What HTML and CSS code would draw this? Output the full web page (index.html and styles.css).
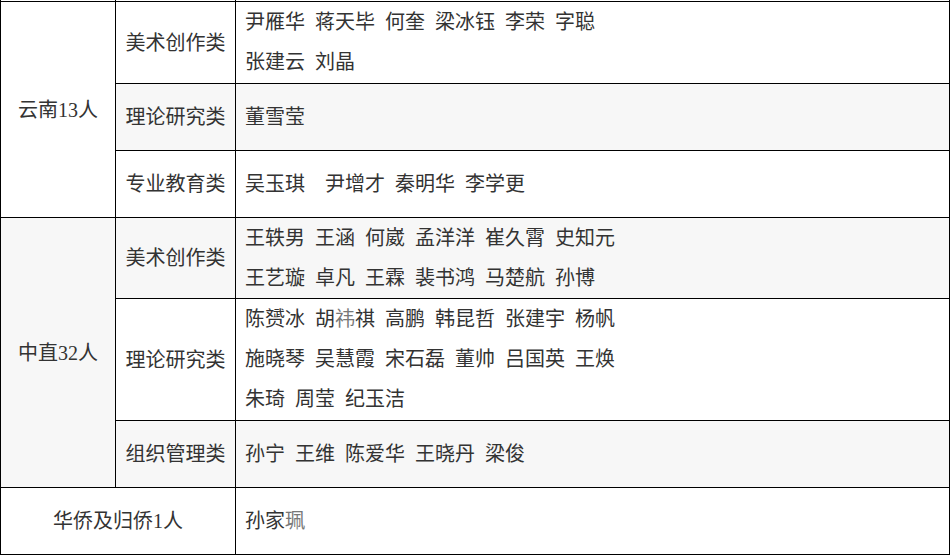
FILE: index.html
```html
<!DOCTYPE html>
<html lang="zh-CN">
<head>
<meta charset="utf-8">
<title>名单</title>
<link rel="stylesheet" href="styles.css">
</head>
<body>
<table class="roster">
  <colgroup>
    <col class="c-region">
    <col class="c-cat">
    <col class="c-names">
  </colgroup>
  <tbody>
    <tr class="cut"><td></td><td></td><td></td></tr>
    <tr>
      <td class="region" rowspan="3">云南13人</td>
      <td class="cat">美术创作类</td>
      <td class="names multi"><div>尹雁华&nbsp; 蒋天毕&nbsp; 何奎&nbsp; 梁冰钰&nbsp; 李荣&nbsp; 字聪</div><div>张建云&nbsp; 刘晶</div></td>
    </tr>
    <tr class="alt single">
      <td class="cat">理论研究类</td>
      <td class="names">董雪莹</td>
    </tr>
    <tr class="single">
      <td class="cat">专业教育类</td>
      <td class="names">吴玉琪&nbsp;&nbsp;&nbsp; 尹增才&nbsp; 秦明华&nbsp; 李学更</td>
    </tr>
    <tr class="alt">
      <td class="region" rowspan="3">中直32人</td>
      <td class="cat">美术创作类</td>
      <td class="names"><div>王轶男&nbsp; 王涵&nbsp; 何崴&nbsp; 孟洋洋&nbsp; 崔久霄&nbsp; 史知元</div><div>王艺璇&nbsp; 卓凡&nbsp; 王霖&nbsp; 裴书鸿&nbsp; 马楚航&nbsp; 孙博</div></td>
    </tr>
    <tr>
      <td class="cat">理论研究类</td>
      <td class="names multi"><div>陈赟冰&nbsp; 胡<span class="rare">祎</span>祺&nbsp; 高鹏&nbsp; 韩昆哲&nbsp; 张建宇&nbsp; 杨帆</div><div>施晓琴&nbsp; 吴慧霞&nbsp; 宋石磊&nbsp; 董帅&nbsp; 吕国英&nbsp; 王焕</div><div>朱琦&nbsp; 周莹&nbsp; 纪玉洁</div></td>
    </tr>
    <tr class="alt single">
      <td class="cat">组织管理类</td>
      <td class="names">孙宁&nbsp; 王维&nbsp; 陈爱华&nbsp; 王晓丹&nbsp; 梁俊</td>
    </tr>
    <tr class="single">
      <td class="region" colspan="2">华侨及归侨1人</td>
      <td class="names">孙家<span class="rare">珮</span></td>
    </tr>
  </tbody>
</table>
</body>
</html>
```

FILE: styles.css
```css
html, body {
  margin: 0;
  padding: 0;
  background: #ffffff;
}

body {
  font-family: "Liberation Serif", "Noto Sans CJK SC", serif;
  font-size: 20px;
  color: #333333;
}

.roster {
  width: 950px;
  border-collapse: collapse;
  table-layout: fixed;
}

.c-region { width: 115px; }
.c-cat { width: 120px; }

.roster td {
  border: 1px solid #000000;
  padding: 0 10px;
  line-height: 40px;
  vertical-align: middle;
  background: #ffffff;
}

.roster tr.alt > td {
  background: #f7f7f7;
}

.roster tr.cut > td {
  height: 1px;
  padding: 0;
  line-height: 0;
  font-size: 0;
  border-top: 0;
}

.roster tr.single > td {
  height: 66px;
}

.roster td.region,
.roster td.cat {
  text-align: center;
  padding: 0;
}

.roster td.names {
  text-align: left;
  padding-left: 9px;
}

.roster td.multi {
  padding-bottom: 1px;
}

.rare {
  color: #777777;
}
```
